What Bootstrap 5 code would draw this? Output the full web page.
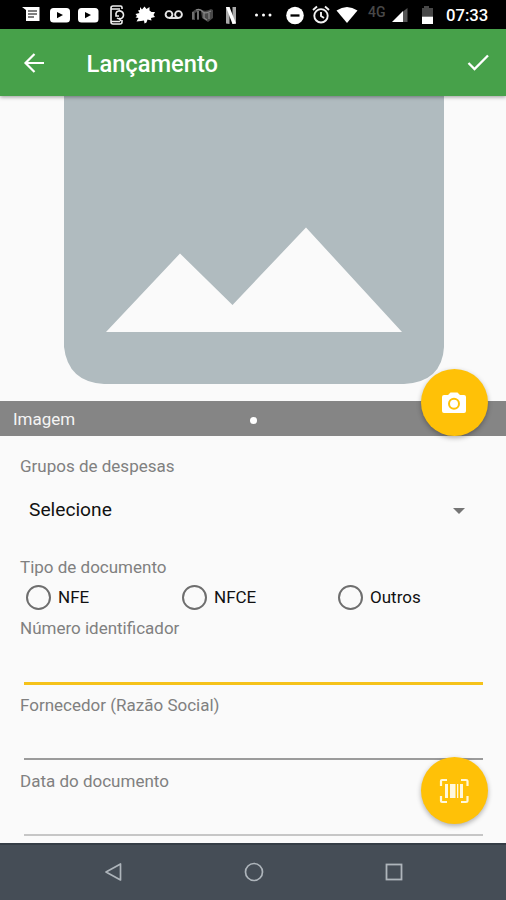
<!DOCTYPE html>
<html lang="pt-BR">
<head>
<meta charset="utf-8">
<meta name="viewport" content="width=device-width, initial-scale=1">
<title>Lançamento</title>
<link href="https://cdn.jsdelivr.net/npm/bootstrap@5.3.0/dist/css/bootstrap.min.css" rel="stylesheet">
<style>
body{font-family:Roboto,"Liberation Sans",sans-serif;background:#fafafa;color:#111;height:900px;overflow:hidden}
svg{display:block;flex:none}
.status-bar{height:29px;background:#000;color:#fff;padding-left:22px;display:grid;grid-template-columns:27px 28px 31px 27px 29px 27px 33px 30px 30px 27px 25px 32px 24px 28px 26px 60px;align-items:center;flex:none}
.net-label{font-size:14px;font-weight:500;line-height:14px;color:#484848;padding-bottom:6px}
.clock{font-size:16.7px;font-weight:500;line-height:20px;padding-top:2px;white-space:nowrap}
.app-bar{height:67px;background:#47a14a;color:#fff;padding:0 16px 0 22px;box-shadow:0 1px 4px rgba(0,0,0,.4);z-index:2;flex:none}
.app-title{font-size:23.7px;font-weight:500;line-height:28px;margin-left:40.6px;padding-top:2px}
.icon-btn{padding:0;border:0;background:none;color:inherit}
.preview{height:305px;flex:none}
.caption-bar{height:35px;background:#858585;flex:none;color:#f4f4f4;font-size:17px;padding-left:13px;line-height:37px}
.page-dot{width:7px;height:7px;background:#fff;left:250px;top:16px}
.fab{width:67px;height:67px;background:#ffc107;color:#fff;border:0;padding:0 2px 0 0;right:18px;box-shadow:0 2px 5px rgba(0,0,0,.3);z-index:3}
.fab-photo{bottom:0}
.fab-scan{top:321px}
.entry-form{height:407px;flex:none;padding:19px 23px 0 20px}
.field-label{display:block;font-size:17px;line-height:22px;padding-bottom:2px;color:#808080;margin:0}
.group-select{height:40px;margin:11px 0 26px;padding:1px 18px 0 9px;font-size:19.2px}
.doc-types{height:36px;margin:-1px 0 2px}
.doc-type{width:156px;flex:none;padding-left:6px;font-size:17px;color:#111}
.doc-type>span:last-child{padding-top:2px}
.ring{width:25px;height:25px;border:2px solid #6e6e6e;margin-right:7px}
.line-input{display:block;border:0;border-radius:0;background:none;padding:0;margin-left:4px;width:459px;outline:0}
.line-active{height:44px;border-bottom:3px solid #f5c21a;margin-bottom:9px}
.line-idle{height:42px;border-bottom:2px solid #9b9b9b;margin-bottom:10px}
.line-faded{height:42px;border-bottom:2px solid #c6c6c6}
.nav-keys{height:57px;background:#454d56;border-top:2px solid #353d46;flex:none;padding:0 102px 2px 103px}
</style>
</head>
<body class="d-flex flex-column m-0">
<header class="status-bar">
  <svg width="18" height="17" viewBox="0 0 18 17"><path fill="#fff" d="M0 1h17.500v14H4V4z"/><path stroke="#555" stroke-width="1.300" d="M6 5h9M6 8h9M6 11h6"/></svg>
  <svg width="21" height="16" viewBox="0 0 21 16"><rect x="1" y="1" width="20" height="14.500" rx="3.500" fill="#fff"/><path d="M8 5l6 3-6 3.200z"/></svg>
  <svg width="22" height="16" viewBox="0 0 22 16"><rect x="1" y="1" width="20.500" height="14.500" rx="3.500" fill="#fff"/><path d="M8 5l6 3-6 3.200z"/></svg>
  <svg width="18" height="20" viewBox="0 0 18 20" fill="none" stroke="#eee" stroke-width="1.600"><path d="M14 4V2.500Q14 1 12.500 1H5Q3 1 3 3v14q0 2 2 2h7q2 0 2-2v-2M3 4h9M3 16.500h9"/><path d="M8 8a4 4 0 1 1 1 5M8 8v3h3M11 13l2 3"/></svg>
  <svg width="21" height="20" viewBox="0 0 21 20"><path fill="#fff" d="M5 2l2 2.500L9.500 1.500l2 2.500 3-2v3.500l2 1.500 3.500 0-1.500 3 1.500 2-4 1 .5 2.500-4-1-1 3-2 1-.5-3-3 .5-4.500.5 2-3.500-3-.5 1.500-1.500L.5 9l4-1L3 5.500l2-.5z"/></svg>
  <svg width="20" height="12" viewBox="0 0 20 12" fill="none" stroke="#e8e8e8" stroke-width="1.900"><circle cx="5" cy="5.500" r="3.400"/><circle cx="14.500" cy="5.500" r="3.400"/><path d="M5 9h9.500"/></svg>
  <svg width="23" height="18" viewBox="0 0 23 18"><path fill="#484848" d="M1 6q5-5 10-2 4 2 9-1l2 1v8l-5 4-6-4-1-7-2 0v9H6V6L4 7v7H1z"/><path stroke="#858585" stroke-width="1.300" fill="none" d="M2 6v7M5 4q4-2 7 2 3 2 8-1M7 5v8M13 7v5l3 2M18 7v6"/></svg>
  <svg width="14" height="20" viewBox="0 0 14 20"><path fill="#aaa" d="M2 2h3.500v17L2 18.500zM8.500 2H12v16.500l-3.500.5z"/><path fill="#fff" d="M2 2h3.500L12 18.500 8.500 19z"/></svg>
  <svg width="20" height="6" viewBox="0 0 20 6" fill="#fff"><circle cx="2.500" cy="3" r="1.500"/><circle cx="9.500" cy="3" r="1.500"/><circle cx="16" cy="3" r="1.500"/></svg>
  <svg width="20" height="20" viewBox="0 0 20 20"><circle cx="11" cy="10.500" r="8.800" fill="#fff"/><path stroke="#000" stroke-width="2.300" d="M6.500 10.500h9"/></svg>
  <svg width="20" height="20" viewBox="0 0 20 20" fill="none" stroke="#f2f2f2" stroke-width="1.900"><circle cx="10" cy="10.800" r="6.700"/><path d="M10 7v4l3 2M2 5l4-3.500M18 5l-4-3.500"/></svg>
  <svg width="22" height="18" viewBox="0 0 22 18"><path fill="#fff" d="M.5 4.500Q11-2.500 21.500 4.500L11 17z"/></svg>
  <span class="net-label">4G</span>
  <svg width="17" height="16" viewBox="0 0 17 16"><path fill="#555" d="M11 4.500L15.500 1v14H11z"/><path fill="#fff" d="M0 15L11 4v11z"/></svg>
  <svg width="14" height="20" viewBox="0 0 14 20"><path fill="#484848" d="M4 1h5v2h4v8H2V3h2z"/><path fill="#fff" d="M2 11.500h11V19H2z"/></svg>
  <span class="clock">07:33</span>
</header>

<nav class="app-bar d-flex align-items-center position-relative">
  <button class="icon-btn" aria-label="Voltar"><svg width="24" height="24" viewBox="0 0 24 24" fill="none" stroke="currentColor" stroke-width="2.200"><path d="M22 12H4M12.500 3L3.500 12l9 9"/></svg></button>
  <h1 class="app-title mb-0">Lançamento</h1>
  <button class="icon-btn ms-auto" aria-label="Salvar"><svg width="24" height="24" viewBox="0 0 24 24" fill="none" stroke="currentColor" stroke-width="2.300"><path d="M2.500 12l6 6L22 4.500"/></svg></button>
</nav>

<section class="position-relative">
  <svg class="preview" width="506" height="305" viewBox="0 96 506 305"><path fill="#b0bbbf" d="M64 96H444V347Q442 382 404 384H104Q68 382 64 347z"/><path fill="#fafafa" d="M106 332L180 253.500 232.500 305 306 227.500 402 332z"/></svg>
  <div class="caption-bar position-relative">Imagem<span class="page-dot position-absolute rounded-circle"></span></div>
  <button class="fab fab-photo position-absolute rounded-circle d-flex align-items-center justify-content-center" aria-label="Câmera"><svg width="26" height="24" viewBox="0 0 26 24"><path fill="#fff" d="M3 4h4l2.500-2.500h7L19 4h4q2 0 2 2v14q0 2-2 2H3q-2 0-2-2V6q0-2 2-2z"/><circle cx="13" cy="12.700" r="5" fill="none" stroke="#ffc107" stroke-width="2"/></svg></button>
</section>

<form class="entry-form position-relative">
  <label class="field-label">Grupos de despesas</label>
  <div class="group-select d-flex align-items-center justify-content-between"><span>Selecione</span><svg width="12" height="6" viewBox="0 0 12 6"><path fill="#757575" d="M0 0h12L6 6z"/></svg></div>
  <label class="field-label">Tipo de documento</label>
  <div class="doc-types d-flex align-items-center">
    <div class="doc-type d-flex align-items-center"><span class="ring rounded-circle"></span><span>NFE</span></div>
    <div class="doc-type d-flex align-items-center"><span class="ring rounded-circle"></span><span>NFCE</span></div>
    <div class="doc-type d-flex align-items-center"><span class="ring rounded-circle"></span><span>Outros</span></div>
  </div>
  <label class="field-label" for="numero">Número identificador</label>
  <input id="numero" class="line-input line-active">
  <label class="field-label" for="fornecedor">Fornecedor (Razão Social)</label>
  <input id="fornecedor" class="line-input line-idle">
  <label class="field-label" for="data">Data do documento</label>
  <input id="data" class="line-input line-faded">
  <button type="button" class="fab fab-scan position-absolute rounded-circle d-flex align-items-center justify-content-center" aria-label="Código de barras"><svg width="30" height="26" viewBox="0 0 30 26"><path fill="none" stroke="#fff8dc" stroke-width="2.200" d="M2 8V3Q2 2 3 2h5M22 2h5q1.500 0 1.500 1v5M28.500 18v5q0 1-1.500 1h-5M8 24H3q-1 0-1-1v-5"/><path fill="#fff8dc" d="M6 6h3v14H6zM11 6h5.500v14H11zM18 6h1.300v14H18zM21 6h3v14h-3z"/></svg></button>
</form>

<footer class="nav-keys d-flex justify-content-between align-items-center">
  <svg width="20" height="20" viewBox="0 0 20 20" fill="none" stroke="#aeb5bb" stroke-width="1.700" stroke-linejoin="round"><path d="M3 10L17.500 2v16z"/></svg>
  <svg width="20" height="20" viewBox="0 0 20 20" fill="none" stroke="#aeb5bb" stroke-width="1.700"><circle cx="10" cy="10" r="8.500"/></svg>
  <svg width="20" height="20" viewBox="0 0 20 20" fill="none" stroke="#aeb5bb" stroke-width="1.800"><rect x="2.500" y="2.500" width="15" height="15"/></svg>
</footer>
<script src="https://cdn.jsdelivr.net/npm/bootstrap@5.3.0/dist/js/bootstrap.bundle.min.js"></script>
</body>
</html>
